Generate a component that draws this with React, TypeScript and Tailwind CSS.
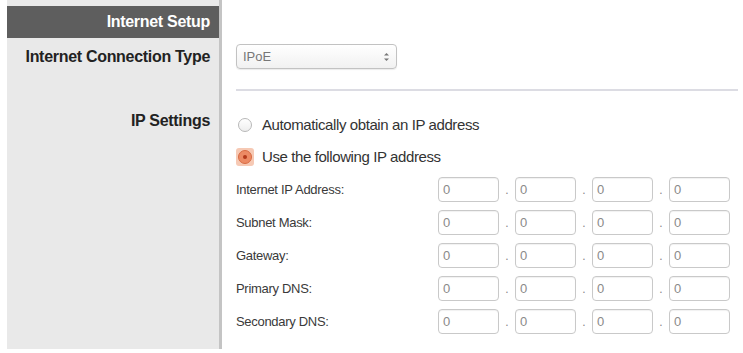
import React from "react";

const rows = ["Internet IP Address:", "Subnet Mask:", "Gateway:", "Primary DNS:", "Secondary DNS:"];

function Octet() {
  return (
    <div className="flex h-[25px] w-[61px] items-center rounded-[4px] border border-[#c9c9c9] bg-white pl-[4px] text-[13px] text-[#8a8a8a] shadow-[inset_0_1px_1px_rgba(0,0,0,0.06)]">
      0
    </div>
  );
}

function IpRow({ label }: { label: string }) {
  return (
    <div className="flex h-[33px] items-center">
      <div className="w-[202px] text-[13px] tracking-[-0.3px] text-[#3a3a3a]">{label}</div>
      <div className="flex items-center">
        {[0, 1, 2, 3].map((i) => (
          <React.Fragment key={i}>
            {i > 0 && <span className="w-[16px] text-center text-[12px] text-[#888]">.</span>}
            <Octet />
          </React.Fragment>
        ))}
      </div>
    </div>
  );
}

export default function App() {
  return (
    <div className="flex h-[353px] w-[743px] overflow-hidden bg-white font-['Liberation_Sans',Arial,sans-serif]">
      {/* sidebar */}
      <div className="ml-[7px] flex h-[349px] w-[215px] shrink-0 flex-col border-r-[3px] border-[#c4c4c4] bg-[#e9e9e9]">
        <div className="h-[6px]" />
        <div className="flex h-[32px] items-center justify-end bg-[#5e5e5e] pr-[9px] text-[16px] font-bold tracking-[-0.3px] text-white">
          Internet Setup
        </div>
        <div className="flex h-[38px] items-center justify-end pr-[9px] text-[16px] font-bold tracking-[-0.3px] text-[#222]">
          Internet Connection Type
        </div>
        <div className="mt-[33px] flex justify-end pr-[9px] text-[16px] font-bold tracking-[-0.3px] text-[#222]">
          IP Settings
        </div>
      </div>

      {/* main */}
      <div className="flex flex-1 flex-col pl-[14px] pr-[5px]">
        <div className="mt-[44px] flex h-[25px] w-[161px] items-center justify-between rounded-[4px] border border-[#c2c2c2] bg-gradient-to-b from-white to-[#f1f1f1] pl-[6px] pr-[6px] text-[13px] text-[#777] shadow-[0_1px_1px_rgba(0,0,0,0.08)]">
          <span>IPoE</span>
          <svg width="7" height="12" viewBox="0 0 7 12">
            <path d="M1 4.5 L3.5 2 L6 4.5Z" fill="#777" />
            <path d="M1 7.5 L3.5 10 L6 7.5Z" fill="#777" />
          </svg>
        </div>
        <div className="mt-[20px] h-[2px] w-full bg-[#dcdce3]" />

        <div className="mt-[24px] flex h-[20px] items-center">
          <span className="ml-[2px] h-[14px] w-[14px] rounded-full border border-[#b8b8b8] bg-gradient-to-b from-white to-[#eee]" />
          <span className="ml-[10px] text-[15px] tracking-[-0.4px] text-[#333]">Automatically obtain an IP address</span>
        </div>
        <div className="mt-[12px] flex h-[20px] items-center">
          <span className="flex h-[18px] w-[18px] items-center justify-center rounded-[3px] bg-[#f6c9b4]">
            <span className="flex h-[14px] w-[14px] items-center justify-center rounded-full border border-[#d86b43] bg-[#ec8a64]">
              <span className="h-[4px] w-[4px] rounded-full bg-[#b3391a]" />
            </span>
          </span>
          <span className="ml-[8px] text-[15px] tracking-[-0.4px] text-[#333]">Use the following IP address</span>
        </div>

        <div className="mt-[6px] flex flex-col">
          {rows.map((r) => (
            <IpRow key={r} label={r} />
          ))}
        </div>
      </div>
    </div>
  );
}
